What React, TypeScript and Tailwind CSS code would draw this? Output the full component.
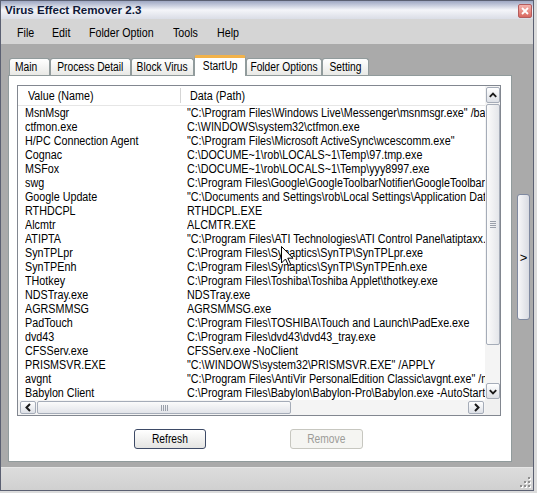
import React from "react";

const rows: [string, string][] = [
  ["MsnMsgr", '"C:\\Program Files\\Windows Live\\Messenger\\msnmsgr.exe" /background'],
  ["ctfmon.exe", "C:\\WINDOWS\\system32\\ctfmon.exe"],
  ["H/PC Connection Agent", '"C:\\Program Files\\Microsoft ActiveSync\\wcescomm.exe"'],
  ["Cognac", "C:\\DOCUME~1\\rob\\LOCALS~1\\Temp\\97.tmp.exe"],
  ["MSFox", "C:\\DOCUME~1\\rob\\LOCALS~1\\Temp\\yyy8997.exe"],
  ["swg", "C:\\Program Files\\Google\\GoogleToolbarNotifier\\GoogleToolbarNotifier.exe"],
  ["Google Update", '"C:\\Documents and Settings\\rob\\Local Settings\\Application Data\\Google\\Update\\GoogleUpdate.exe" /c'],
  ["RTHDCPL", "RTHDCPL.EXE"],
  ["Alcmtr", "ALCMTR.EXE"],
  ["ATIPTA", '"C:\\Program Files\\ATI Technologies\\ATI Control Panel\\atiptaxx.exe"'],
  ["SynTPLpr", "C:\\Program Files\\Synaptics\\SynTP\\SynTPLpr.exe"],
  ["SynTPEnh", "C:\\Program Files\\Synaptics\\SynTP\\SynTPEnh.exe"],
  ["THotkey", "C:\\Program Files\\Toshiba\\Toshiba Applet\\thotkey.exe"],
  ["NDSTray.exe", "NDSTray.exe"],
  ["AGRSMMSG", "AGRSMMSG.exe"],
  ["PadTouch", "C:\\Program Files\\TOSHIBA\\Touch and Launch\\PadExe.exe"],
  ["dvd43", "C:\\Program Files\\dvd43\\dvd43_tray.exe"],
  ["CFSServ.exe", "CFSServ.exe -NoClient"],
  ["PRISMSVR.EXE", '"C:\\WINDOWS\\system32\\PRISMSVR.EXE" /APPLY'],
  ["avgnt", '"C:\\Program Files\\AntiVir PersonalEdition Classic\\avgnt.exe" /min'],
  ["Babylon Client", "C:\\Program Files\\Babylon\\Babylon-Pro\\Babylon.exe -AutoStart"],
];

const tabs: { label: string; w: string; active?: boolean; cls?: string }[] = [
  { label: "Main", w: "w-[41px]", cls: "justify-start pl-[5px]" },
  { label: "Process Detail", w: "w-[81px]" },
  { label: "Block Virus", w: "w-[63px]" },
  { label: "StartUp", w: "w-[52px]", active: true },
  { label: "Folder Options", w: "w-[76px]" },
  { label: "Setting", w: "w-[47px]" },
];

function NL({ children }: { children: React.ReactNode }) {
  return <span className="inline-block whitespace-nowrap origin-left scale-x-[0.82]">{children}</span>;
}

function LL({ children }: { children: React.ReactNode }) {
  return <span className="inline-block whitespace-nowrap origin-left scale-x-[0.86]">{children}</span>;
}

function NC({ children }: { children: React.ReactNode }) {
  return <span className="inline-block whitespace-nowrap origin-center scale-x-[0.82]">{children}</span>;
}

function Chevron({ dir }: { dir: "up" | "down" | "left" | "right" }) {
  const pts =
    dir === "up"
      ? "3,8 6.5,4.5 10,8"
      : dir === "down"
      ? "3,5 6.5,8.5 10,5"
      : dir === "left"
      ? "8,3 4.5,6.5 8,10"
      : "5,3 8.5,6.5 5,10";
  return (
    <svg width="13" height="13" viewBox="0 0 13 13">
      <polyline points={pts} fill="none" stroke="#1a1a1a" strokeWidth="2" />
    </svg>
  );
}

function ArrowBtn({ dir, cls }: { dir: "up" | "down" | "left" | "right"; cls: string }) {
  return (
    <div
      className={`${cls} flex items-center justify-center rounded-[2px] border border-[#a5acb8] bg-gradient-to-b from-[#ffffff] to-[#dde0e6] shrink-0`}
    >
      <Chevron dir={dir} />
    </div>
  );
}

export default function App() {
  return (
    <div className="relative w-[537px] h-[493px] bg-[#dcdcdc] overflow-hidden text-black font-['Liberation_Sans',Arial,sans-serif]">
      <div className="w-[534px] h-[491px] border border-[#5b6072] flex flex-col bg-[#aaaaaa]">
        {/* Title bar */}
        <div className="h-[18px] shrink-0 flex items-center justify-between pl-[4px] pr-[1px] bg-gradient-to-b from-[#9ea7c2] via-[#f4f5f9] to-[#dadde6]">
          <span className="font-bold text-[11.6px] leading-none text-[#0f1838]">Virus Effect Remover 2.3</span>
          <div className="w-[14px] h-[14px] mt-[2px] rounded-[2px] border border-[#b45c5c] bg-gradient-to-b from-[#f3b3ad] to-[#d9675f] flex items-center justify-center">
            <svg width="8" height="8" viewBox="0 0 8 8">
              <path d="M1 1 L7 7 M7 1 L1 7" stroke="#ffffff" strokeWidth="1.8" />
            </svg>
          </div>
        </div>

        {/* Menu bar */}
        <div className="h-[25px] shrink-0 bg-[#d5d5d5] flex items-center pl-[16px] text-[13px] leading-none pt-[2px]">
          <div className="w-[35px]"><NL>File</NL></div>
          <div className="w-[37px]"><NL>Edit</NL></div>
          <div className="w-[84px]"><NL>Folder Option</NL></div>
          <div className="w-[44px]"><NL>Tools</NL></div>
          <div className="w-[40px]"><NL>Help</NL></div>
        </div>

        {/* Client */}
        <div className="h-[423px] shrink-0 flex pl-[7px] pt-[11px]">
          <div className="w-[504px] flex flex-col">
            {/* Tabs */}
            <div className="h-[20px] flex items-end pl-[1px] text-[12.5px] leading-none">
              {tabs.map((t) =>
                t.active ? (
                  <div
                    key={t.label}
                    className={`${t.w} h-[21px] -mb-px relative z-10 bg-white border-x border-[#919b9c] border-t-[3px] border-t-[#f2b24a] rounded-t-[3px] flex items-center justify-center pb-[2px]`}
                  >
                    <NC>{t.label}</NC>
                  </div>
                ) : (
                  <div
                    key={t.label}
                    className={`${t.w} h-[17px] bg-gradient-to-b from-[#ffffff] to-[#e9e9e6] border-x border-t border-[#919b9c] rounded-t-[3px] flex items-center ${t.cls ?? "justify-center"} pt-[1px]`}
                  >
                    {t.cls ? <NL>{t.label}</NL> : <NC>{t.label}</NC>}
                  </div>
                )
              )}
            </div>
            {/* Panel */}
            <div className="h-[387px] bg-white border border-[#919b9c] pl-[8px] pt-[9px] flex flex-col">
              {/* List box */}
              <div className="w-[484px] h-[331px] border border-[#828790] flex flex-col text-[12.5px]">
                <div className="h-[314px] flex">
                  <div className="w-[467px] overflow-hidden relative">
                    <div className="h-[20px] flex items-center border-b border-[#e6e6e6]">
                      <div className="w-[162px] pl-[10px] pt-[1px]"><LL>Value (Name)</LL></div>
                      <div className="w-px h-[15px] bg-[#d5d5d5]" />
                      <div className="pl-[9px] pt-[1px]"><LL>Data (Path)</LL></div>
                    </div>
                    {rows.map(([n, p]) => (
                      <div key={n} className="h-[14px] flex items-center leading-[14px] whitespace-nowrap">
                        <div className="w-[162px] pl-[7px] shrink-0"><LL>{n}</LL></div>
                        <div className="pl-[7px] shrink-0"><LL>{p}</LL></div>
                      </div>
                    ))}
                  </div>
                  {/* Vertical scrollbar */}
                  <div className="w-[15px] bg-[#f4f4f4] flex flex-col items-center pt-[1px]">
                    <ArrowBtn dir="up" cls="w-[14px] h-[16px]" />
                    <div className="mt-[1px] w-[14px] h-[241px] rounded-[2px] border border-[#a5acb8] bg-gradient-to-r from-[#fbfbfb] to-[#e4e6ea] flex items-center justify-center">
                      <div className="flex flex-col gap-[1px]">
                        <div className="w-[6px] h-px bg-[#9aa0aa]" />
                        <div className="w-[6px] h-px bg-[#9aa0aa]" />
                        <div className="w-[6px] h-px bg-[#9aa0aa]" />
                        <div className="w-[6px] h-px bg-[#9aa0aa]" />
                      </div>
                    </div>
                    <div className="flex-1" />
                    <ArrowBtn dir="down" cls="w-[14px] h-[16px] mb-[1px]" />
                  </div>
                </div>
                <div className="h-[15px] flex">
                  {/* Horizontal scrollbar */}
                  <div className="w-[467px] bg-[#f4f4f4] flex items-center pl-[2px] pr-[1px]">
                    <ArrowBtn dir="left" cls="w-[16px] h-[13px]" />
                    <div className="ml-[1px] w-[254px] h-[13px] rounded-[2px] border border-[#a5acb8] bg-gradient-to-b from-[#fbfbfb] to-[#e2e4e9] flex items-center justify-center">
                      <div className="flex gap-[1px]">
                        <div className="w-px h-[6px] bg-[#9aa0aa]" />
                        <div className="w-px h-[6px] bg-[#9aa0aa]" />
                        <div className="w-px h-[6px] bg-[#9aa0aa]" />
                        <div className="w-px h-[6px] bg-[#9aa0aa]" />
                      </div>
                    </div>
                    <div className="flex-1" />
                    <ArrowBtn dir="right" cls="w-[16px] h-[13px]" />
                  </div>
                  <div className="w-[15px] bg-[#f0f0f0]" />
                </div>
              </div>
              {/* Buttons */}
              <div className="mt-[13px] ml-[117px] flex gap-[84px] text-[12.5px]">
                <div className="w-[72px] h-[20px] rounded-[3px] border border-[#3d4a66] bg-gradient-to-b from-[#ffffff] to-[#e4e4e2] flex items-center justify-center">
                  <NC>Refresh</NC>
                </div>
                <div className="w-[73px] h-[20px] rounded-[3px] border border-[#c7c7c0] bg-[#f5f5f2] text-[#9c9c98] flex items-center justify-center">
                  <NC>Remove</NC>
                </div>
              </div>
            </div>
          </div>
          {/* Right side collapse button */}
          <div className="ml-[5px] mt-[139px] w-[13px] h-[126px] rounded-[3px] border border-[#7f89a0] bg-gradient-to-r from-[#f7f7f9] to-[#d9dbe2] flex items-center justify-center text-[13px] leading-none">
            &gt;
          </div>
        </div>

        {/* Status bar */}
        <div className="h-[23px] shrink-0 border-t border-[#e6e6e6] bg-gradient-to-b from-[#dcdcdc] to-[#d0d0d0] flex justify-end items-end pr-[2px] pb-[2px]">
          <svg width="11" height="11" viewBox="0 0 11 11">
            {[
              [8, 0],
              [8, 4],
              [4, 4],
              [8, 8],
              [4, 8],
              [0, 8],
            ].map(([x, y]) => (
              <g key={`${x}-${y}`}>
                <rect x={x + 1} y={y + 1} width="2" height="2" fill="#ffffff" />
                <rect x={x} y={y} width="2" height="2" fill="#8f8f8f" />
              </g>
            ))}
          </svg>
        </div>
      </div>

      {/* Mouse cursor */}
      <svg className="absolute left-[281px] top-[246px]" width="13" height="21" viewBox="0 0 13 21">
        <path d="M0.5 0.5 L0.5 17 L4.5 13 L7.5 19.5 L9.8 18.5 L6.8 12.2 L12 12.2 Z" fill="#ffffff" stroke="#000000" strokeWidth="1" />
      </svg>
    </div>
  );
}
